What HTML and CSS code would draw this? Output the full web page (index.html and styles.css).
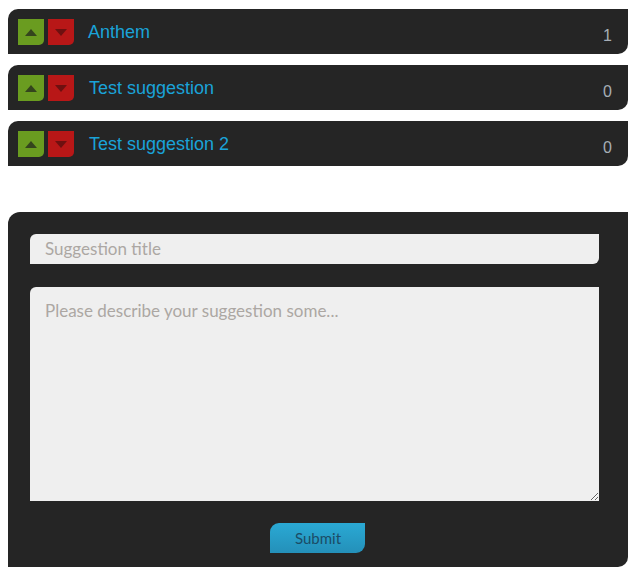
FILE: index.html
```html
<!DOCTYPE html>
<html>
<head>
<meta charset="utf-8">
<link rel="stylesheet" href="styles.css">
</head>
<body>
<div class="list">
  <div class="item">
    <div class="vote">
      <span class="btn up"><span class="tri-up"></span></span>
      <span class="btn down"><span class="tri-down"></span></span>
    </div>
    <a class="title">Anthem</a>
    <span class="count">1</span>
  </div>
  <div class="item">
    <div class="vote">
      <span class="btn up"><span class="tri-up"></span></span>
      <span class="btn down"><span class="tri-down"></span></span>
    </div>
    <a class="title t2">Test suggestion</a>
    <span class="count">0</span>
  </div>
  <div class="item">
    <div class="vote">
      <span class="btn up"><span class="tri-up"></span></span>
      <span class="btn down"><span class="tri-down"></span></span>
    </div>
    <a class="title t2">Test suggestion 2</a>
    <span class="count">0</span>
  </div>
</div>
<form class="panel">
  <input class="field" type="text" placeholder="Suggestion title">
  <textarea class="area" placeholder="Please describe your suggestion some..."></textarea>
  <div class="actions"><button class="submit" type="button">Submit</button></div>
</form>
</body>
</html>
```

FILE: styles.css
```css
body {
  margin: 9px 7px 0 8px;
  background: #fff;
  font-family: "Liberation Sans", Arial, sans-serif;
}
.list {
  display: flex;
  flex-direction: column;
  gap: 11px;
}
.item {
  height: 45px;
  background: #252525;
  border-radius: 10px 0 10px 0;
  display: flex;
  align-items: center;
  padding: 0 16px 0 10px;
}
.vote {
  display: flex;
  gap: 4px;
  margin-top: 1px;
}
.btn {
  width: 26px;
  height: 26px;
  border-radius: 0 0 5px 0;
  display: flex;
  align-items: center;
  justify-content: center;
}
.up { background: #6a9c20; }
.down { background: #b81717; }
.tri-up {
  width: 0; height: 0;
  border-left: 6px solid transparent;
  border-right: 6px solid transparent;
  border-bottom: 7px solid #34451d;
}
.tri-down {
  width: 0; height: 0;
  border-left: 6px solid transparent;
  border-right: 6px solid transparent;
  border-top: 7px solid #6e1010;
}
.title {
  margin-left: 14px;
  color: #1aa3d8;
  font-size: 18px;
  margin-top: 1px;
}
.t2 { margin-left: 15px; }
.count {
  margin-left: auto;
  color: #a6aeb6;
  font-size: 16px;
  margin-top: 9px;
}
.panel {
  margin: 46px 0 0 0;
  background: #252525;
  border-radius: 12px 0 10px 0;
  padding: 22px 29px 14px 22px;
  display: flex;
  flex-direction: column;
}
.field, .area {
  background: #efefef;
  border: none;
  outline: none;
  font-family: Lato, "Open Sans", sans-serif;
  font-size: 17px;
  color: #333;
  margin: 0;
  box-sizing: border-box;
  width: 569px;
}
.field::placeholder, .area::placeholder { color: #aca7a3; }
.field {
  height: 30px;
  border-radius: 6px 0 6px 0;
  padding: 0 15px 2px;
}
.area {
  margin-top: 23px;
  height: 214px;
  border-radius: 6px 0 0 0;
  padding: 13px 15px;
  resize: both;
}
.actions {
  display: flex;
  margin-top: 22px;
  padding-left: 240px;
}
.submit {
  width: 95px;
  height: 30px;
  border: none;
  border-radius: 9px 0 9px 0;
  background: linear-gradient(#2aa9d4, #2490b9);
  color: #1b4c66;
  font-family: Lato, "Open Sans", sans-serif;
  font-size: 15px;
  padding: 0 0 0 1px;
}
```
